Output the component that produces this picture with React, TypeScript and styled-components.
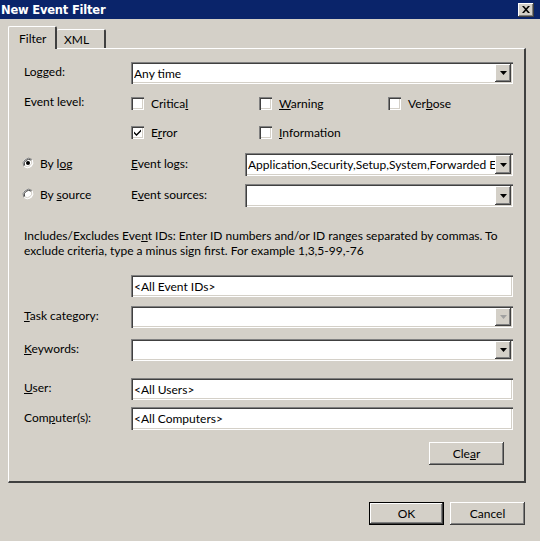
import styled, { createGlobalStyle } from "styled-components"

const GlobalStyle = createGlobalStyle`
    html, body {
        margin: 0;
        padding: 0;
        background: #d4d0c8;
    }
    body {
        font-family: Lato, "Liberation Sans", sans-serif;
        font-size: 12px;
        color: #000;
    }
`

const Window = styled.div`
    width: 540px;
    height: 541px;
    background: #d4d0c8;
    display: flex;
    flex-direction: column;
    overflow: hidden;
`
const TitleBar = styled.div`
    height: 19px;
    background: #0a246a;
    display: flex;
    align-items: center;
    justify-content: space-between;
    padding: 0 6px 0 1px;
`
const Title = styled.div`
    color: #fff;
    font-family: "DejaVu Sans", sans-serif;
    font-weight: bold;
    font-size: 11.5px;
    letter-spacing: -0.2px;
`
const CloseButton = styled.div`
    width: 16px;
    height: 14px;
    background: #d4d0c8;
    box-sizing: border-box;
    box-shadow: inset -1px -1px #404040, inset 1px 1px #fff, inset -2px -2px #808080;
    display: flex;
    align-items: center;
    justify-content: center;
`
const Body = styled.div`
    padding: 8px 14px 0 8px;
    display: flex;
    flex-direction: column;
`
const TabStrip = styled.div`
    display: flex;
    align-items: flex-end;
    height: 22px;
    position: relative;
    z-index: 1;
    margin-bottom: -1px;
`
const Tab = styled.div<{ $active?: boolean }>`
    height: ${p => p.$active ? "23px" : "19px"};
    width: 49px;
    padding: 0 ${p => p.$active ? "10px" : "7px"};
    padding-top: ${p => p.$active ? "4px" : "0"};
    box-sizing: border-box;
    display: flex;
    align-items: ${p => p.$active ? "flex-start" : "center"};
    background: #d4d0c8;
    border-top: 1px solid #fff;
    border-left: ${p => p.$active ? "1px solid #fff" : "none"};
    border-right: 2px solid #404040;
    margin-bottom: ${p => p.$active ? "0" : "1px"};
    border-radius: 2px 2px 0 0;
`
const Panel = styled.div`
    height: 435px;
    box-sizing: border-box;
    border-top: 1px solid #fff;
    border-left: 1px solid #fff;
    border-right: 2px solid #404040;
    border-bottom: 2px solid #404040;
    padding: 0 11px 0 15px;
    display: flex;
    flex-direction: column;
`
const Row = styled.div<{ $top: number; $h?: number }>`
    margin-top: ${p => p.$top}px;
    height: ${p => p.$h ?? 22}px;
    display: grid;
    grid-template-columns: 107px 114px 1fr;
    align-items: center;
`
const Label = styled.div`
    margin-top: -3px;
    white-space: nowrap;
`
const Field = styled.div<{ $wide?: boolean }>`
    grid-column: ${p => p.$wide ? "2 / 4" : "3 / 4"};
    height: 100%;
    box-sizing: border-box;
    background: #fff;
    box-shadow: inset 1px 1px #808080, inset 2px 2px #404040, inset -1px -1px #fff, inset -2px -2px #d4d0c8;
    display: flex;
    align-items: center;
    padding: 0 2px 0 3px;
    overflow: hidden;
    white-space: nowrap;
`
const FieldText = styled.div`
    flex: 1;
    overflow: hidden;
    white-space: nowrap;
    line-height: 16px;
    margin-top: 1px;
`
const ArrowButton = styled.div<{ $disabled?: boolean }>`
    width: 16px;
    height: calc(100% - 4px);
    flex-shrink: 0;
    background: #d4d0c8;
    box-sizing: border-box;
    box-shadow: inset -1px -1px #404040, inset 1px 1px #fff, inset -2px -2px #808080;
    display: flex;
    align-items: center;
    justify-content: center;
    svg { fill: ${p => p.$disabled ? "#a0a0a0" : "#000"}; }
`
const CheckGrid = styled.div`
    grid-column: 2 / 4;
    display: grid;
    grid-template-columns: 128px 129px 1fr;
    align-items: center;
`
const CheckItem = styled.div`
    display: flex;
    align-items: center;
    gap: 7px;
`
const Box = styled.div`
    width: 13px;
    height: 13px;
    box-sizing: border-box;
    background: #fff;
    box-shadow: inset 1px 1px #808080, inset 2px 2px #404040, inset -1px -1px #fff, inset -2px -2px #d4d0c8;
    display: flex;
    align-items: center;
    justify-content: center;
`
const RadioItem = styled.div`
    display: flex;
    align-items: center;
    gap: 6px;
    margin-left: -2px;
    margin-top: -3px;
    white-space: nowrap;
`
const Radio = styled.div`
    width: 12px;
    height: 12px;
    flex-shrink: 0;
`
const Description = styled.div`
    margin-top: 21px;
    line-height: 15px;
    padding-right: 10px;
`
const ButtonRow = styled.div<{ $top: number; $inset?: number }>`
    margin-top: ${p => p.$top}px;
    padding-right: ${p => p.$inset ?? 0}px;
    display: flex;
    justify-content: flex-end;
    gap: 6px;
`
const Button = styled.div<{ $default?: boolean }>`
    width: 75px;
    height: 23px;
    box-sizing: border-box;
    background: #d4d0c8;
    display: flex;
    align-items: center;
    justify-content: center;
    border: ${p => p.$default ? "1px solid #000" : "none"};
    box-shadow: inset -1px -1px #404040, inset 1px 1px #fff, inset -2px -2px #808080;
`
const Footer = styled.div`
    margin-top: 19px;
    padding-right: 1px;
`

const U = styled.span`
    text-decoration: underline;
`

const Arrow = () => (
    <svg width="7" height="4" viewBox="0 0 7 4">
        <path d="M0 0h7L3.5 4z" />
    </svg>
)

const Combo = ({ text, wide, disabled }: { text?: string; wide?: boolean; disabled?: boolean }) => (
    <Field $wide={wide}>
        <FieldText>{text}</FieldText>
        <ArrowButton $disabled={disabled}><Arrow /></ArrowButton>
    </Field>
)

const Check = ({ checked, children }: { checked?: boolean; children: React.ReactNode }) => (
    <CheckItem>
        <Box>
            {checked && (
                <svg width="7" height="7" viewBox="0 0 7 7">
                    <path d="M0 2.5l2.5 2.5L7 0.5v2L2.5 7 0 4.5z" fill="#000" />
                </svg>
            )}
        </Box>
        <span>{children}</span>
    </CheckItem>
)

const RadioOption = ({ checked, children }: { checked?: boolean; children: React.ReactNode }) => (
    <RadioItem>
        <Radio>
            <svg width="12" height="12" viewBox="0 0 12 12">
                <circle cx="6" cy="6" r="5" fill="#fff" />
                <path d="M10.2 2.6A5.5 5.5 0 0 0 1.8 9.4" stroke="#808080" fill="none" />
                <path d="M9.4 3.3A4.5 4.5 0 0 0 2.6 8.7" stroke="#404040" fill="none" />
                <path d="M1.8 9.4A5.5 5.5 0 0 0 10.2 2.6" stroke="#fff" fill="none" />
                <path d="M2.6 8.7A4.5 4.5 0 0 0 9.4 3.3" stroke="#d4d0c8" fill="none" />
                {checked && <circle cx="6" cy="6" r="2" fill="#000" />}
            </svg>
        </Radio>
        <span>{children}</span>
    </RadioItem>
)

export default function App() {
    return (
        <>
            <GlobalStyle />
            <Window>
                <TitleBar>
                    <Title>New Event Filter</Title>
                    <CloseButton>
                        <svg width="8" height="7" viewBox="0 0 8 7">
                            <path d="M0 0h2l2 2.2L6 0h2L5 3.5 8 7H6L4 4.8 2 7H0l3-3.5z" fill="#000" />
                        </svg>
                    </CloseButton>
                </TitleBar>
                <Body>
                    <TabStrip>
                        <Tab $active>Filter</Tab>
                        <Tab>XML</Tab>
                    </TabStrip>
                    <Panel>
                        <Row $top={13}>
                            <Label>Lo<U>g</U>ged:</Label>
                            <Combo wide text="Any time" />
                        </Row>
                        <Row $top={10} $h={18}>
                            <Label>Event level:</Label>
                            <CheckGrid>
                                <Check>Critica<U>l</U></Check>
                                <Check><U>W</U>arning</Check>
                                <Check>Ver<U>b</U>ose</Check>
                            </CheckGrid>
                        </Row>
                        <Row $top={11} $h={18}>
                            <span />
                            <CheckGrid>
                                <Check checked>E<U>r</U>ror</Check>
                                <Check><U>I</U>nformation</Check>
                            </CheckGrid>
                        </Row>
                        <Row $top={12} $h={23}>
                            <RadioOption checked>By l<U>o</U>g</RadioOption>
                            <Label><U>E</U>vent logs:</Label>
                            <Combo text="Application,Security,Setup,System,Forwarded Events" />
                        </Row>
                        <Row $top={8} $h={23}>
                            <RadioOption>By <U>s</U>ource</RadioOption>
                            <Label>E<U>v</U>ent sources:</Label>
                            <Combo />
                        </Row>
                        <Description>
                            Includes/Excludes Eve<U>n</U>t IDs: Enter ID numbers and/or ID ranges separated by commas. To exclude criteria, type a minus sign first. For example 1,3,5-99,-76
                        </Description>
                        <Row $top={17}>
                            <span />
                            <Field $wide><FieldText>&lt;All Event IDs&gt;</FieldText></Field>
                        </Row>
                        <Row $top={9}>
                            <Label><U>T</U>ask category:</Label>
                            <Combo wide disabled />
                        </Row>
                        <Row $top={11}>
                            <Label><U>K</U>eywords:</Label>
                            <Combo wide />
                        </Row>
                        <Row $top={17}>
                            <Label><U>U</U>ser:</Label>
                            <Field $wide><FieldText>&lt;All Users&gt;</FieldText></Field>
                        </Row>
                        <Row $top={7} $h={23}>
                            <Label>Com<U>p</U>uter(s):</Label>
                            <Field $wide><FieldText>&lt;All Computers&gt;</FieldText></Field>
                        </Row>
                        <ButtonRow $top={12} $inset={9}>
                            <Button>Cle<U>a</U>r</Button>
                        </ButtonRow>
                    </Panel>
                    <Footer>
                        <ButtonRow $top={0}>
                            <Button $default>OK</Button>
                            <Button>Cancel</Button>
                        </ButtonRow>
                    </Footer>
                </Body>
            </Window>
        </>
    )
}
